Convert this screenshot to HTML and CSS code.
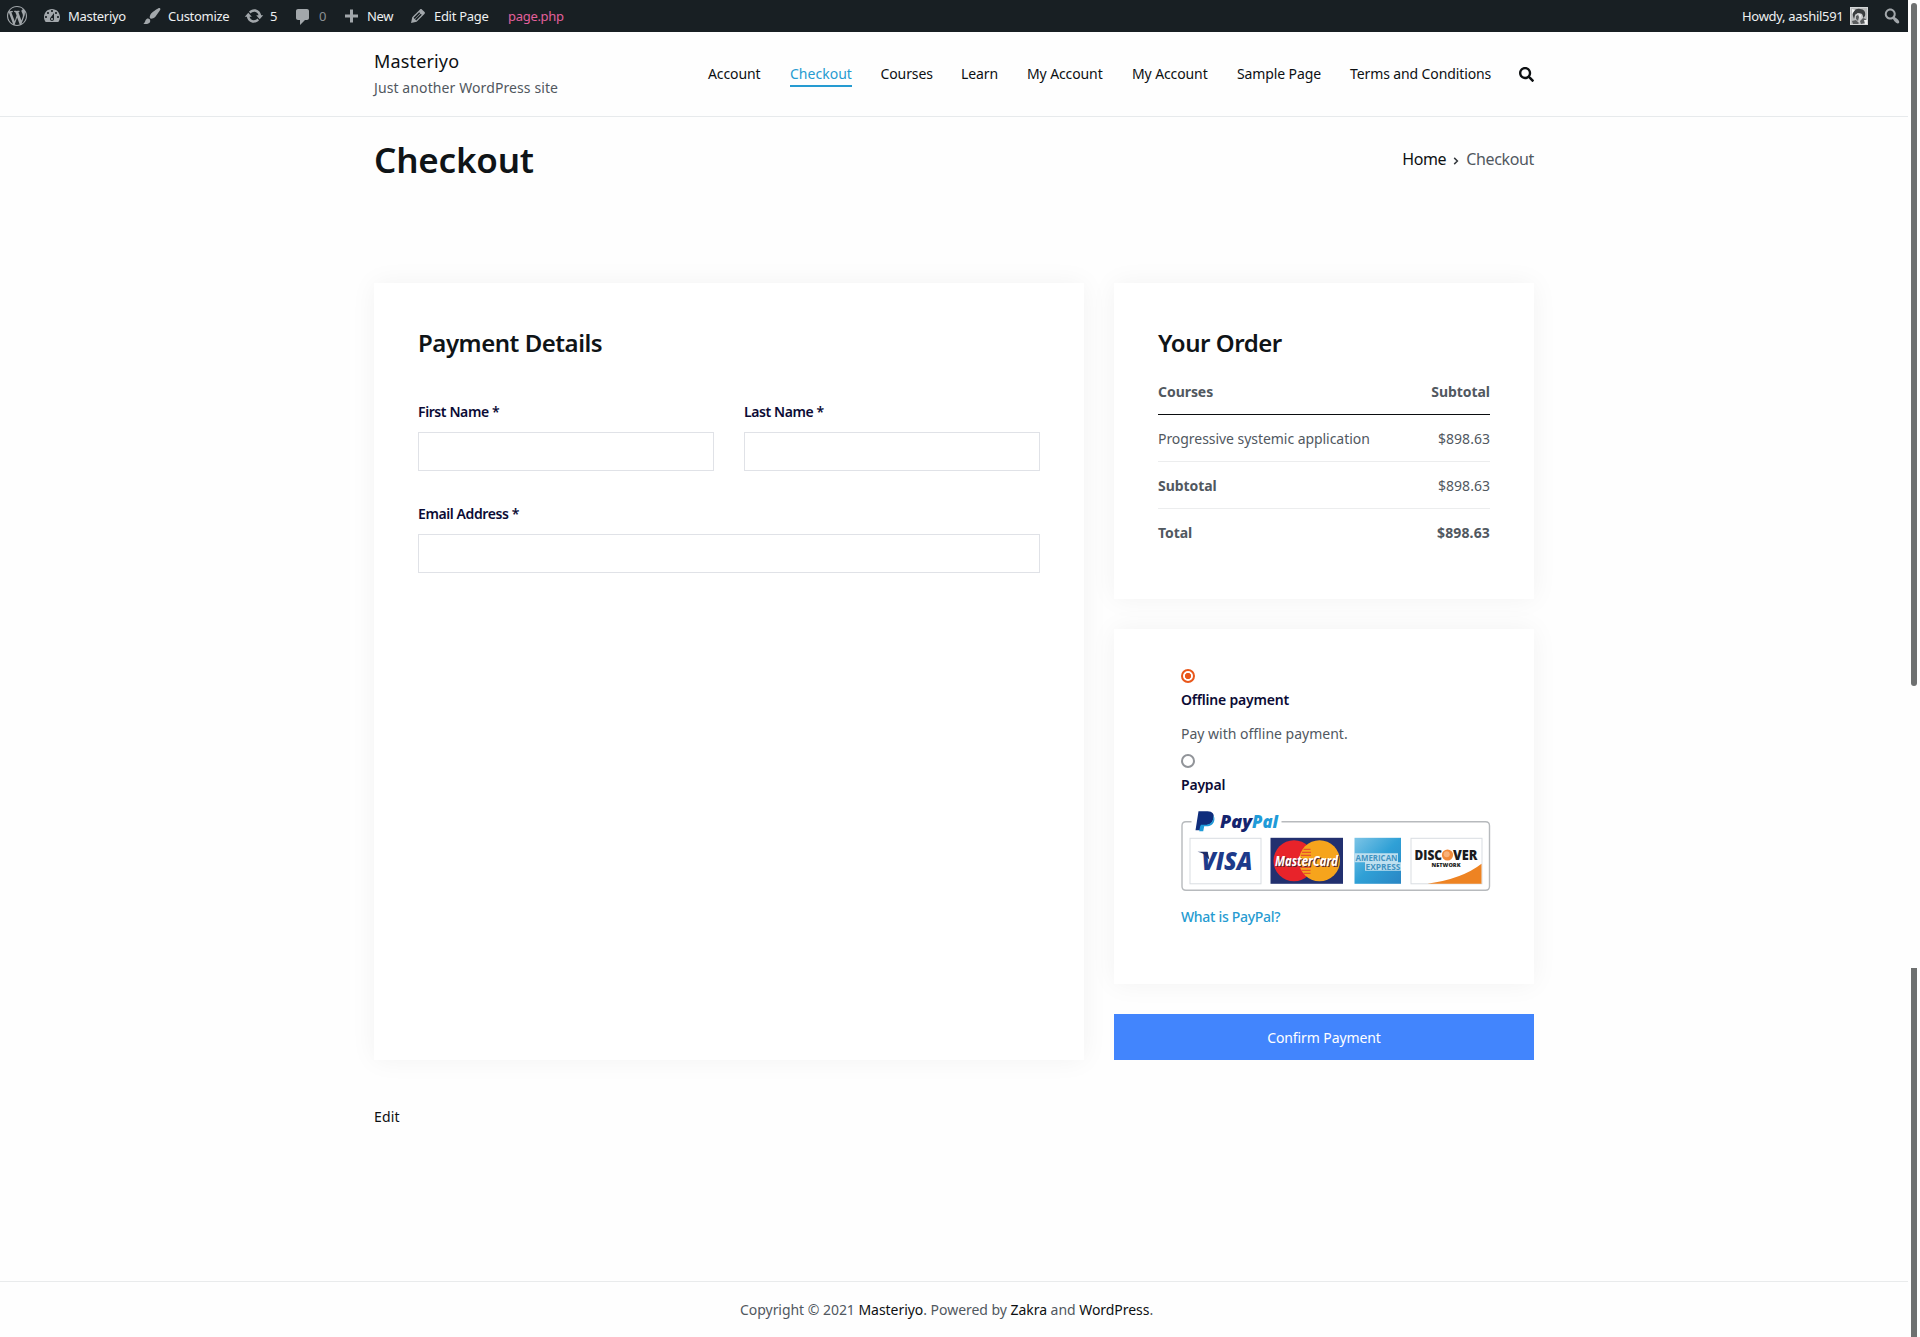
FILE: index.html
```html
<!DOCTYPE html>
<html lang="en">
<head>
<meta charset="utf-8">
<title>Checkout – Masteriyo</title>
<link rel="stylesheet" href="styles.css">
</head>
<body>
<div class="adminbar">
  <span class="ab-item"><svg class="ab-wp" viewBox="0 0 20 20"><path d="M20 10c0-5.51-4.49-10-10-10C4.48 0 0 4.49 0 10c0 5.52 4.48 10 10 10 5.51 0 10-4.48 10-10zM7.78 15.37L4.37 6.22c.55-.02 1.17-.08 1.17-.08.5-.06.44-1.13-.06-1.11 0 0-1.45.11-2.37.11-.18 0-.37 0-.58-.01C4.12 2.69 6.87 1.11 10 1.11c2.33 0 4.45.87 6.05 2.34-.68-.11-1.65.39-1.65 1.58 0 .74.45 1.36.9 2.1.35.61.55 1.36.55 2.46 0 1.49-1.4 5-1.4 5l-3.03-8.37c.54-.02.82-.17.82-.17.5-.05.44-1.25-.06-1.22 0 0-1.44.12-2.38.12-.87 0-2.33-.12-2.33-.12-.5-.03-.56 1.2-.06 1.22l.92.08 1.26 3.41zM17.41 10c.24-.64.74-1.87.43-4.25.7 1.29 1.05 2.71 1.05 4.25 0 3.29-1.73 6.24-4.4 7.78.97-2.59 1.94-5.2 2.92-7.78zM6.1 18.09C3.12 16.65 1.11 13.53 1.11 10c0-1.3.23-2.48.72-3.59C3.25 10.3 4.67 14.2 6.1 18.09zm4.03-6.63l2.58 6.98c-.86.29-1.76.45-2.71.45-.79 0-1.57-.11-2.29-.33.81-2.38 1.62-4.74 2.42-7.1z"/></svg></span>
  <span class="ab-item"><svg viewBox="0 0 20 20"><path fill-rule="evenodd" d="M3.76 16h12.48c1.1-1.37 1.76-3.11 1.76-5 0-4.42-3.58-8-8-8s-8 3.58-8 8c0 1.89.66 3.63 1.76 5zM10 4c.55 0 1 .45 1 1s-.45 1-1 1-1-.45-1-1 .45-1 1-1zM6 6c.55 0 1 .45 1 1s-.45 1-1 1-1-.45-1-1 .45-1 1-1zm8 0c.55 0 1 .45 1 1s-.45 1-1 1-1-.45-1-1 .45-1 1-1zm-5.37 5.55L12 7v6c0 1.1-.9 2-2 2s-2-.9-2-2c0-.57.24-1.08.63-1.45zM4 10c.55 0 1 .45 1 1s-.45 1-1 1-1-.45-1-1 .45-1 1-1zm12 0c.55 0 1 .45 1 1s-.45 1-1 1-1-.45-1-1 .45-1 1-1zm-5 3c0-.55-.45-1-1-1s-1 .45-1 1 .45 1 1 1 1-.45 1-1z"/></svg>Masteriyo</span>
  <span class="ab-item"><svg viewBox="0 0 20 20"><path d="M18.33 3.57s.27-.8-.31-1.36c-.53-.52-1.22-.24-1.22-.24-.61.3-5.76 3.47-7.67 5.57-.86.96-2.06 3.79-1.09 4.82.92.98 3.96-.17 4.79-1 2.06-2.06 5.21-7.17 5.5-7.79zM1.4 17.65c2.37-1.56 1.46-3.41 3.23-4.64.93-.65 2.22-.62 3.08.29.63.67.8 2.57-.16 3.46-1.57 1.45-4 1.55-6.15.89z"/></svg>Customize</span>
  <span class="ab-item"><svg viewBox="0 0 20 20"><path d="M10.2 3.28c3.53 0 6.43 2.61 6.92 6h2.08l-3.5 4-3.5-4h2.32c-.45-1.97-2.21-3.45-4.32-3.45-1.45 0-2.73.71-3.54 1.78L4.95 5.66C6.23 4.2 8.11 3.28 10.2 3.28zm-.4 13.44c-3.52 0-6.43-2.61-6.92-6H.8l3.5-4c1.17 1.33 2.33 2.67 3.5 4H5.48c.45 1.97 2.21 3.45 4.32 3.45 1.45 0 2.73-.71 3.54-1.78l1.71 1.95c-1.28 1.46-3.15 2.38-5.25 2.38z"/></svg>5</span>
  <span class="ab-item ab-muted"><svg viewBox="0 0 20 20"><path d="M5 3h9c1.1 0 2 .9 2 2v7c0 1.100-.9 2-2 2h-2l-5 5v-5H5c-1.100 0-2-.9-2-2V5c0-1.100.9-2 2-2z"/></svg>0</span>
  <span class="ab-item"><svg viewBox="0 0 20 20"><path d="M17 8.500v3h-5v5H9v-5H4v-3h5v-5h3v5h5z"/></svg>New</span>
  <span class="ab-item"><svg viewBox="0 0 20 20"><path fill-rule="evenodd" d="M13.89 3.39l2.71 2.72c.46.46.42 1.24.03 1.64l-8.01 8.02-5.56 1.16 1.16-5.58s7.6-7.63 7.99-8.03c.39-.39 1.22-.39 1.68.07zm-2.73 2.79l-5.59 5.61 1.11 1.11 5.54-5.65zm-2.97 8.23l5.58-5.6-1.07-1.08-5.59 5.6z"/></svg>Edit Page</span>
  <span class="ab-item ab-template">page.php</span>
  <span class="ab-item ab-user">Howdy, aashil591
    <svg class="avatar" viewBox="0 0 18 18"><rect width="18" height="18" fill="#d4d6d7"/><path d="M1 1h16v16H1z" fill="#b9bbbc"/><path d="M3 9C2 4 6 1 10 2c4 0 6 3 5 7l-2 2-1-4-4-1-3 2-1 4z" fill="#3a3d3f"/><path d="M5 8l3-2 4 1 1 3-1 4-3 2-3-2z" fill="#c9cacb"/><path d="M6 9l2-1 1 2-1 4-2-2zM2 14l4-1 3 3-1 1H3zM10 14l3-3 3 1-1 4-4 1z" fill="#5a5d5f"/><path d="M2 2l3 1-3 4zM14 13h3v4h-2zM9 7l2 1-1 4z" fill="#f1f2f2"/></svg>
  </span>
  <span class="ab-item"><svg viewBox="0 0 20 20"><path fill-rule="evenodd" d="M12.14 4.18c1.87 1.87 2.11 4.75.72 6.89.12.1.22.21.36.31.2.16.47.36.81.59.34.24.56.39.66.47.42.31.73.57.94.78.32.32.6.65.84 1 .25.35.44.69.59 1.04.14.35.21.68.18 1-.02.32-.14.59-.36.81s-.49.34-.81.36c-.31.02-.65-.04-.99-.19-.35-.14-.7-.34-1.04-.59-.35-.24-.68-.52-1-.84-.21-.21-.47-.52-.77-.93-.1-.13-.25-.35-.47-.66-.22-.32-.4-.57-.56-.78-.16-.2-.29-.35-.44-.5-2.07 1.09-4.69.76-6.44-.98-2.14-2.15-2.14-5.64 0-7.78 2.15-2.15 5.63-2.15 7.78 0zm-1.41 6.36c1.36-1.37 1.36-3.58 0-4.95-1.37-1.37-3.59-1.37-4.95 0-1.37 1.37-1.37 3.58 0 4.95 1.36 1.37 3.58 1.37 4.95 0z"/></svg></span>
</div>

<header class="site-header">
  <div class="container header-row">
    <div class="branding">
      <div class="site-title">Masteriyo</div>
      <div class="tagline">Just another WordPress site</div>
    </div>
    <nav class="menu">
      <a>Account</a>
      <a class="current">Checkout</a>
      <a>Courses</a>
      <a>Learn</a>
      <a>My Account</a>
      <a>My Account</a>
      <a>Sample Page</a>
      <a>Terms and Conditions</a>
      <svg class="search" viewBox="0 0 512 512"><path fill-rule="evenodd" d="M505 442.7L405.3 343c-4.5-4.5-10.6-7-17-7H372c27.6-35.3 44-79.7 44-128C416 93.1 322.9 0 208 0S0 93.1 0 208s93.1 208 208 208c48.3 0 92.7-16.4 128-44v16.3c0 6.4 2.5 12.5 7 17l99.7 99.7c9.4 9.4 24.6 9.4 33.9 0l28.3-28.3c9.4-9.4 9.4-24.6.1-34zM208 336c-70.7 0-128-57.2-128-128 0-70.7 57.2-128 128-128 70.7 0 128 57.2 128 128 0 70.7-57.2 128-128 128z"/></svg>
    </nav>
  </div>
</header>

<div class="container page-header">
  <h1>Checkout</h1>
  <div class="breadcrumb"><a>Home</a><svg viewBox="0 0 6 8"><path d="M1.2 .9L4.4 4 1.2 7.1"/></svg><span>Checkout</span></div>
</div>

<main class="container checkout">
  <section class="card details">
    <h2>Payment Details</h2>
    <div class="fields">
      <label>First Name *<input type="text"></label>
      <label>Last Name *<input type="text"></label>
      <label class="wide">Email Address *<input type="text"></label>
    </div>
  </section>
  <div class="side">
    <section class="card order">
      <h2>Your Order</h2>
      <div class="row head"><b>Courses</b><b>Subtotal</b></div>
      <div class="row"><span>Progressive systemic application</span><span class="amount">$898.63</span></div>
      <div class="row"><b>Subtotal</b><span class="amount">$898.63</span></div>
      <div class="row last"><b>Total</b><b class="amount-total">$898.63</b></div>
    </section>
    <section class="card methods">
      <span class="radio checked"></span>
      <div class="method">Offline payment</div>
      <p>Pay with offline payment.</p>
      <span class="radio"></span>
      <div class="method paypal">Paypal</div>
      <svg class="cards" viewBox="0.500 0.700 310 82">
        <defs>
          <linearGradient id="amex" x1="0" y1="0" x2="1" y2="1"><stop offset="0" stop-color="#7cc4e6"/><stop offset=".5" stop-color="#2fa0d6"/><stop offset="1" stop-color="#2a86c4"/></linearGradient>
        </defs>
        <path d="M11 11.5H5.5q-4 0-4 4V76q0 4 4 4H305q4 0 4-4V15.500q0-4-4-4H101" fill="none" stroke="#b7babd" stroke-width="1.4"/>
        <path d="M18 1h9c5 0 7 3 6 7-1 5-4 7-9 7h-3l-1 5h-5z" fill="#0f2d7c"/>
        <path d="M32.500 5c1.500 1.500 1.800 3.500 1.200 5.500-1 4-4 5.500-7.500 5.500h-2.500l-1 5h-4l1-5 .8-1.500h4c5 0 7.800-2.500 8.500-7z" fill="#1f9bd8"/>
        <text x="39.500" y="17.500" class="pp dark" textLength="32" lengthAdjust="spacingAndGlyphs">Pay</text>
        <text x="71.500" y="17.500" class="pp light" textLength="26" lengthAdjust="spacingAndGlyphs">Pal</text>
        <rect x="9.500" y="28" width="71" height="45.500" fill="#fff" stroke="#d9dde2"/>
        <text x="21" y="59.500" class="visa" textLength="51" lengthAdjust="spacingAndGlyphs">VISA</text>
        <path d="M17 41.500h10l2 8-3-3q-3-4-9-5z" fill="#1d2a66"/>
        <rect x="90" y="27.500" width="72.500" height="46" fill="#22306f"/>
        <circle cx="113.500" cy="50.500" r="20.500" fill="#e8232a"/>
        <circle cx="139" cy="50.500" r="20.500" fill="#f6a41c"/>
        <path d="M123 39h7M121.500 42h9M120.500 45h10M119.500 57h11M121 60h9M123 63h7" stroke="#e8532a" stroke-width="1.300"/>
        <text x="95.500" y="56.500" class="mc shadow" textLength="63" lengthAdjust="spacingAndGlyphs">MasterCard</text>
        <text x="94.500" y="56" class="mc" textLength="63" lengthAdjust="spacingAndGlyphs">MasterCard</text>
        <rect x="174" y="27.500" width="46.500" height="46" fill="url(#amex)"/>
        <path d="M174 43h43.500v9H174zM184.500 52h36v8.500h-36z" fill="#bfe0f0"/>
        <text x="175" y="50.800" class="ax" textLength="42" lengthAdjust="spacingAndGlyphs">AMERICAN</text>
        <text x="185" y="59.800" class="ax" textLength="35" lengthAdjust="spacingAndGlyphs">EXPRESS</text>
        <rect x="230.500" y="28" width="71" height="45.500" fill="#fff" stroke="#d9dde2"/>
        <path d="M301 53.500V73.500H247q35-5 54-20z" fill="#ee8322"/>
        <circle cx="267" cy="44.700" r="5.600" fill="#f08a3c"/>
        <circle cx="266.200" cy="44" r="3" fill="#f8b27c"/>
        <text x="234" y="50" class="disc" textLength="27.500" lengthAdjust="spacingAndGlyphs">DISC</text>
        <text x="272.500" y="50" class="disc" textLength="24.500" lengthAdjust="spacingAndGlyphs">VER</text>
        <text x="251" y="56.800" class="net" textLength="29" lengthAdjust="spacingAndGlyphs">NETWORK</text>
      </svg>
      <a class="what">What is PayPal?</a>
    </section>
    <button class="confirm">Confirm Payment</button>
  </div>
</main>

<div class="container edit"><a>Edit</a></div>

<footer class="site-footer">
  <div class="copyright">Copyright © 2021 <a>Masteriyo</a>. Powered by <a>Zakra</a> and <a>WordPress</a>.</div>
</footer>

<div class="thumb thumb-top"></div>
<div class="thumb thumb-bottom"></div>
</body>
</html>
```

FILE: styles.css
```css
* { box-sizing: border-box; }

body {
  margin: 0;
  width: 1908px;
  height: 1337px;
  display: flex;
  flex-direction: column;
  overflow: hidden;
  background: #fefefe;
  color: #51585f;
  font: 14px/22px "Noto Sans", "Open Sans", sans-serif;
}

h1, h2, p { margin: 0; }
svg { display: block; flex: none; }
.container { width: 1160px; margin: 0 auto; }

/* Admin toolbar */
.adminbar {
  height: 32px;
  flex: none;
  padding-left: 7px;
  display: grid;
  grid-template-columns: 35px 100px 102px 49px 48px 67px 100px 1234px 140px 26px;
  background: #181f23;
  color: #eef0f1;
  font-size: 13px;
  letter-spacing: -.3px;
}
.ab-item { display: flex; align-items: center; gap: 6px; white-space: nowrap; }
.ab-item svg { width: 20px; height: 20px; fill: #a2a7ab; }
.ab-muted { color: #8b9094; }
.ab-template { color: #e2609c; }
.ab-item .avatar { width: 18px; height: 18px; }

/* Site header */
.site-header { height: 85px; flex: none; border-bottom: 1px solid #e7eaec; }
.header-row { display: flex; justify-content: space-between; }
.branding { padding-top: 16px; }
.site-title { font-size: 18px; line-height: 26px; letter-spacing: .15px; color: #0d1012; }
.tagline { margin-top: 1px; line-height: 26px; letter-spacing: .1px; }
.menu {
  display: grid;
  grid-template-columns: 82px 90.500px 80.500px 66px 105px 105px 113px 169px 15px;
  padding-top: 31px;
  color: #0d1012;
  letter-spacing: -.11px;
  white-space: nowrap;
}
.menu a { justify-self: start; height: 24px; }
.menu .current { color: #269bd1; border-bottom: 2px solid #269bd1; letter-spacing: .02px; }
.search { width: 15px; height: 15px; margin-top: 4px; fill: #0d1012; }

/* Page title and breadcrumb */
.page-header { height: 166px; flex: none; display: flex; justify-content: space-between; padding-top: 19px; }
h1 { font-size: 35px; line-height: 48px; font-weight: 560; letter-spacing: -.2px; color: #0f1417; }
.breadcrumb { display: flex; align-items: center; height: 48px; font-size: 16px; letter-spacing: -.36px; padding-bottom: 2px; }
.breadcrumb a { color: #0d1012; }
.breadcrumb svg { width: 6px; height: 8px; margin: 3px 7px 0 7px; fill: none; stroke: #35393d; stroke-width: 1.5; }

/* Checkout */
.checkout { height: 777px; flex: none; display: grid; grid-template-columns: 710px 420px; gap: 30px; }
.card { background: #fff; box-shadow: 0 0 25px rgba(0, 0, 0, .05); padding: 44px; }
h2 { font-size: 24px; line-height: 32px; font-weight: 560; letter-spacing: -.46px; color: #0f1417; }
.fields { display: grid; grid-template-columns: 1fr 1fr; gap: 32px 30px; padding-top: 42px; }
label { display: flex; flex-direction: column; gap: 9px; font-weight: 560; letter-spacing: -.4px; color: #0b0b35; }
label.wide { grid-column: span 2; }
input { height: 39px; width: 100%; border: 1px solid #e0e2e7; background: #fff; padding: 0 10px; }

.side { display: flex; flex-direction: column; gap: 30px; }
.order { height: 316px; }
.row { display: flex; justify-content: space-between; align-items: center; height: 47px; padding-top: 2px; border-bottom: 1px solid #ecedee; letter-spacing: -.05px; }
.row.head { height: 56px; padding-top: 10px; border-color: #0b0d0f; }
.row.last { border-bottom: 0; padding-top: 0; }
.row b { font-weight: 700; }
.amount { letter-spacing: .03px; }
.amount-total { letter-spacing: .14px; }

.methods { height: 355px; padding: 40px 44px 0 67px; }
.radio { display: block; width: 14px; height: 14px; border: 2px solid #919499; border-radius: 50%; }
.radio.checked { border-color: #e9571b; background: radial-gradient(circle, #e9571b 2.8px, #fff 3.400px); }
.method { margin-top: 6px; font-weight: 560; letter-spacing: -.2px; color: #0b0b35; }
.methods p { margin: 12px 0 9px; }
.cards { width: 310px; height: 82px; margin-top: 15px; font-family: "Open Sans", sans-serif; }
.what { display: block; margin-top: 13px; font-weight: 540; letter-spacing: -.3px; color: #269bd1; }
.pp { font-size: 17px; font-weight: 800; font-style: italic; }
.dark { fill: #14246e; }
.light { fill: #1f9bd8; }
.visa { font-size: 24px; font-weight: 800; font-style: italic; fill: #1d3a8a; }
.mc { font-size: 15px; font-weight: 700; font-style: italic; fill: #fff; }
.mc.shadow { fill: #58232f; }
.ax { font-size: 8.500px; font-weight: 700; fill: #3f93c2; }
.disc { font-size: 14.500px; font-weight: 800; fill: #1b1b20; }
.net { font-size: 5px; font-weight: 800; fill: #1b1b20; }

.confirm {
  height: 46px;
  border: 0;
  background: #4285fd;
  color: #fff;
  font: 14px "Noto Sans", "Open Sans", sans-serif;
  letter-spacing: -.1px;
}

.edit { flex: none; padding-top: 46px; letter-spacing: .2px; color: #0d1012; }

.site-footer { margin-top: auto; height: 56px; flex: none; border-top: 1px solid #e9ebec; }
.copyright { padding: 17px 0 0 740px; letter-spacing: -.04px; white-space: nowrap; }
.copyright a { color: #0d1012; }

/* Overlay scrollbar thumbs */
.thumb { position: absolute; left: 1911px; width: 6px; background: #6e7070; }
.thumb-top { top: 3px; height: 683px; border-radius: 3px; }
.thumb-bottom { top: 968px; height: 369px; }
```
